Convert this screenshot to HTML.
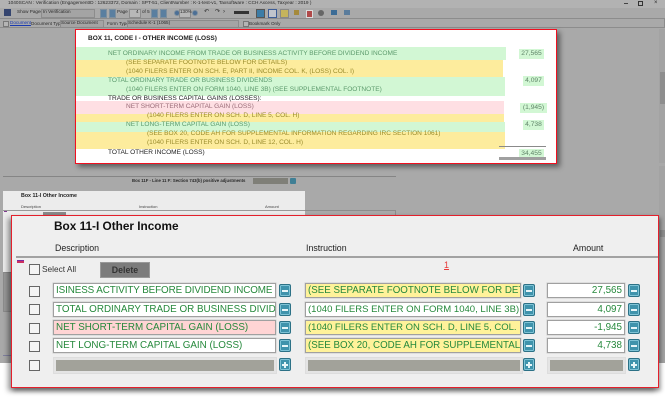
<!DOCTYPE html>
<html><head><meta charset="utf-8"><style>
html,body{margin:0;padding:0;background:#a9a9a9}
#p{position:relative;width:665px;height:407px;overflow:hidden;background:#a9a9a9;font-family:"Liberation Sans",sans-serif}
#p div{position:absolute;white-space:nowrap}
.t{font-size:4.6px;color:#2b2b2b;line-height:6px}
.ib{width:6px;height:7px;background:#5a7fa0;border:1px solid #7d8f9e}
.b{height:13px;line-height:13px;font-size:6.55px}
.g{color:#5c9a6c}.y{color:#9a8c2c}.k{color:#222}.r{color:#9a6c78}
.am{background:#d2f7d4;color:#5f8468;font-size:6.7px;text-align:center;line-height:10px;height:10px}
.in{height:13px;border:1px solid #a0a0a0;background:#fff;box-shadow:0 0 0 .5px #ccc;overflow:hidden;font-size:9.85px;line-height:13px;color:#26893c;padding-left:2px;box-sizing:content-box}
.cb{width:9px;height:9px;border:1px solid #666;background:#f4f4f4;left:29px}
.ic{width:10px;height:11px;background:#3f93ac;border:1px solid #2c7186;border-radius:2px;box-shadow:inset 0 0 0 1px #7ec3d6;color:#fff}
.ic:after{content:"";position:absolute;left:2px;top:4.5px;width:6px;height:2px;background:#e6f5f8}
.pl:before{content:"";position:absolute;left:4px;top:2.5px;width:2px;height:6px;background:#e6f5f8}
.off{height:11px;background:#a2a29a;border:2px solid #e4e4e4;outline:1px solid #ddd}
</style></head><body><div id="p">
<div style="left:0px;top:363px;width:665px;height:44px;background:#fff"></div>
<div style="left:0px;top:0px;width:665px;height:8px;background:#b2b2b2"></div>
<div class="t" style="left:8px;top:1px;font-size:4.75px">1040SCAN : Verification (EngagementID : 12623372, Domain : SPT-51, ClientNumber : K-1-test-v1, Taxsoftware : CCH Axcess, Taxyear : 2019 )</div>
<div style="left:624px;top:3px;width:4px;height:1px;background:#444"></div>
<div style="left:638px;top:1px;width:3px;height:3px;border:1px solid #333"></div>
<div class="t" style="left:654px;top:0px;font-size:6px">×</div>
<div style="left:0px;top:18px;width:665px;height:1px;background:#8c8c8c"></div>
<div style="left:4px;top:9px;width:7px;height:7px;background:#35456f"></div>
<div class="t" style="left:17px;top:9px">Show Page(s)</div>
<div style="left:41px;top:9px;width:52px;height:7px;background:#a4a4a4;border:1px solid #8c8c8c"></div>
<div class="t" style="left:43px;top:9px">In Verification</div>
<div class="ib" style="left:100px;top:9px;width:5px"></div>
<div class="ib" style="left:109px;top:9px;width:5px"></div>
<div class="t" style="left:117px;top:9px">Page</div>
<div style="left:129px;top:9px;width:10px;height:7px;background:#b8b8b8;border:1px solid #8c8c8c"></div>
<div class="t" style="left:136px;top:9px">4</div>
<div class="t" style="left:142px;top:9px">of 5</div>
<div class="ib" style="left:151px;top:9px;width:5px"></div>
<div class="ib" style="left:160px;top:9px;width:5px"></div>
<div style="left:174px;top:10px;width:4px;height:4px;border-radius:50%;background:#4c6f96;border:1px solid #7d8f9e"></div>
<div style="left:179px;top:9px;width:10px;height:7px;background:#b8b8b8;border:1px solid #8c8c8c"></div>
<div class="t" style="left:180px;top:9px">130%</div>
<div style="left:192px;top:10px;width:4px;height:4px;border-radius:50%;background:#4c6f96;border:1px solid #7d8f9e"></div>
<div class="t" style="left:204px;top:9px;font-size:6px">↶</div>
<div class="t" style="left:215px;top:9px;font-size:6px">↷</div>
<div class="t" style="left:223px;top:9px;font-size:6px">›</div>
<div style="left:234px;top:11px;width:15px;height:3px;background:#333"></div>
<div style="left:256px;top:9px;width:7px;height:7px;background:#3c7ca6;border:1px solid #555"></div>
<div style="left:268px;top:9px;width:7px;height:7px;background:#c0c4cc;border:1px solid #3c5c96"></div>
<div style="left:280px;top:9px;width:7px;height:7px;background:#c5b45c;border:1px solid #888"></div>
<div style="left:294px;top:10px;width:5px;height:5px;background:#a58a3c"></div>
<div style="left:306px;top:10px;width:5px;height:6px;background:#b04a4a;border:1px solid #ddd"></div>
<div style="left:318px;top:10px;width:6px;height:6px;border-radius:50%;background:#666"></div>
<div style="left:331px;top:10px;width:6px;height:5px;background:#3c6c96"></div>
<div style="left:344px;top:10px;width:6px;height:5px;background:#5a7c9c"></div>
<div style="left:0px;top:19px;width:664px;height:8px;border:1px solid #8c8c8c;border-width:0 1px 1px 0"></div>
<div style="left:3px;top:21px;width:4px;height:4px;background:#b4b4b4;border:1px solid #777"></div>
<div class="t" style="left:10px;top:20px;color:#1a3ab0;text-decoration:underline">Document</div>
<div class="t" style="left:31px;top:21px">Document Type</div>
<div style="left:60px;top:20px;width:42px;height:6px;background:#a4a4a4;border:1px solid #8c8c8c"></div>
<div class="t" style="left:61px;top:20px">Source Document</div>
<div class="t" style="left:107px;top:21px">Form Type</div>
<div style="left:127px;top:20px;width:110px;height:6px;background:#a4a4a4;border:1px solid #8c8c8c"></div>
<div class="t" style="left:128px;top:20px">Schedule K-1 (1065)</div>
<div style="left:243px;top:21px;width:4px;height:4px;background:#b4b4b4;border:1px solid #777"></div>
<div class="t" style="left:249px;top:21px">Bookmark Only</div>

<!-- scrollbars -->
<div style="left:659px;top:29px;width:6px;height:134px;background:#a3a3a3"></div>
<div style="left:660px;top:72px;width:5px;height:32px;background:#8e8e8e"></div>
<div style="left:659px;top:166px;width:6px;height:197px;background:#a3a3a3"></div>
<div style="left:660px;top:230px;width:5px;height:7px;background:#8e8e8e"></div>

<!-- top panel -->
<div style="left:75px;top:29px;width:480px;height:133px;background:#fff;border:1px solid #f01020;box-shadow:3px 3px 5px rgba(0,0,0,.45)"></div>
<div style="left:76px;top:47px;width:430px;height:13px;background:#d2f7d4"></div>
<div style="left:76px;top:60px;width:427px;height:17px;background:#fdec9d"></div>
<div style="left:76px;top:77px;width:429px;height:19px;background:#d2f7d4"></div>
<div style="left:76px;top:101px;width:428px;height:13px;background:#fedfe3"></div>
<div style="left:76px;top:114px;width:428px;height:8px;background:#fdec9d"></div>
<div style="left:76px;top:122px;width:429px;height:10px;background:#d2f7d4"></div>
<div style="left:76px;top:132px;width:429px;height:17px;background:#fdec9d"></div>

<div class="b k" style="left:88px;top:32px;font-weight:bold;font-size:6.5px">BOX 11, CODE I - OTHER INCOME (LOSS)</div>
<div class="b g" style="left:108px;top:47px">NET ORDINARY INCOME FROM TRADE OR BUSINESS ACTIVITY BEFORE DIVIDEND INCOME</div>
<div class="b y" style="left:126px;top:56px">(SEE SEPARATE FOOTNOTE BELOW FOR DETAILS)</div>
<div class="b y" style="left:126px;top:65px">(1040 FILERS ENTER ON SCH. E, PART II, INCOME COL. K, (LOSS) COL. I)</div>
<div class="b g" style="left:108px;top:74px">TOTAL ORDINARY TRADE OR BUSINESS DIVIDENDS</div>
<div class="b g" style="left:126px;top:83px">(1040 FILERS ENTER ON FORM 1040, LINE 3B) (SEE SUPPLEMENTAL FOOTNOTE)</div>
<div class="b k" style="left:108px;top:92px">TRADE OR BUSINESS CAPITAL GAINS (LOSSES):</div>
<div class="b r" style="left:126px;top:100px">NET SHORT-TERM CAPITAL GAIN (LOSS)</div>
<div class="b y" style="left:147px;top:109px">(1040 FILERS ENTER ON SCH. D, LINE 5, COL. H)</div>
<div class="b g" style="left:126px;top:118px">NET LONG-TERM CAPITAL GAIN (LOSS)</div>
<div class="b y" style="left:147px;top:127px">(SEE BOX 20, CODE AH FOR SUPPLEMENTAL INFORMATION REGARDING IRC SECTION 1061)</div>
<div class="b y" style="left:147px;top:136px">(1040 FILERS ENTER ON SCH. D, LINE 12, COL. H)</div>
<div class="b k" style="left:108px;top:146px">TOTAL OTHER INCOME (LOSS)</div>

<div class="am" style="left:519px;top:49px;width:25px">27,565</div>
<div class="am" style="left:523px;top:76px;width:21px">4,097</div>
<div class="am" style="left:520px;top:103px;width:27px">(1,945)</div>
<div class="am" style="left:523px;top:120px;width:21px">4,738</div>
<div style="left:499px;top:146px;width:47px;height:1px;background:#8a8a8a"></div>
<div class="am" style="left:519px;top:149px;width:25px">34,455</div>
<div style="left:499px;top:157px;width:47px;height:3px;background:#a0a0a0"></div>

<!-- middle layer -->
<div style="left:3px;top:176px;width:393px;height:1px;background:#858585"></div>
<div class="t" style="left:132px;top:178px;font-weight:bold;font-size:4.25px">Box 11F - Line 11 F: Section 743(b) positive adjustments</div>
<div style="left:253px;top:178px;width:35px;height:6px;background:#7f7f78"></div>
<div style="left:290px;top:178px;width:6px;height:6px;background:#3f7f95;border-radius:1px"></div>
<div style="left:3px;top:210px;width:391px;height:100px;border:1px solid #8c8c8c;border-bottom:0"></div>
<div style="left:3px;top:191px;width:302px;height:81px;background:#ececec"></div>
<div class="t" style="left:21px;top:193px;font-weight:bold;font-size:5.3px;color:#222">Box 11-I Other Income</div>
<div class="t" style="left:21px;top:204px;font-size:4px;color:#444">Description</div>
<div class="t" style="left:139px;top:204px;font-size:4px;color:#444">Instruction</div>
<div class="t" style="left:265px;top:204px;font-size:4px;color:#444">Amount</div>
<div style="left:3px;top:210px;width:302px;height:1px;background:#999"></div>
<div style="left:4px;top:211px;width:3px;height:1px;background:#803a90"></div>
<div style="left:43px;top:212px;width:23px;height:4px;background:#8a8a8a"></div>
<div style="left:3px;top:272px;width:8px;height:38px;background:#999;border:1px solid #8c8c8c;border-right:0"></div>
<div style="left:3px;top:355px;width:8px;height:1px;background:#8080a0"></div>

<!-- bottom panel -->
<div style="left:11px;top:215px;width:646px;height:171px;background:#efefef;border:1px solid #e4202c;box-shadow:-3px 3px 5px rgba(0,0,0,.4),2px 3px 4px rgba(0,0,0,.35)"></div>
<div style="left:54px;top:220px;font-weight:bold;font-size:11.8px;line-height:13px;color:#111">Box 11-I Other Income</div>
<div style="left:55px;top:243px;font-size:8.8px;line-height:11px;color:#222">Description</div>
<div style="left:306px;top:243px;font-size:8.8px;line-height:11px;color:#222">Instruction</div>
<div style="left:573px;top:243px;font-size:8.8px;line-height:11px;color:#222">Amount</div>
<div style="left:16px;top:256px;width:642px;height:2px;background:#a2a2a2"></div>
<div style="left:17px;top:260px;width:7px;height:1px;background:#7a2aa0"></div>
<div style="left:17px;top:261px;width:7px;height:2px;background:#cc3060"></div>
<div class="cb" style="top:264px"></div>
<div style="left:42px;top:263px;font-size:8.3px;line-height:12px;color:#333">Select All</div>
<div style="left:100px;top:262px;width:50px;height:16px;background:#7c7c7c;box-shadow:inset 0 0 0 1px #999;text-align:center;font-weight:bold;font-size:8.8px;line-height:16px;color:#333">Delete</div>
<div style="left:444px;top:260px;font-size:9px;line-height:11px;color:#e83a3a;text-decoration:underline">1</div>

<div class="cb" style="top:286px"></div>
<div class="in" style="left:53px;top:283px;width:219px;letter-spacing:-.1px">ISINESS ACTIVITY BEFORE DIVIDEND INCOME</div>
<div class="ic" style="left:279px;top:284px"></div>
<div class="in" style="left:305px;top:283px;width:212px;background:#fff29a;font-size:9.75px">(SEE SEPARATE FOOTNOTE BELOW FOR DETAILS)</div>
<div class="ic" style="left:523px;top:284px"></div>
<div class="in" style="left:547px;top:283px;width:74px;padding:0 2px 0 0;text-align:right">27,565</div>
<div class="ic" style="left:628px;top:284px"></div>

<div class="cb" style="top:304px"></div>
<div class="in" style="left:53px;top:302px;width:219px">TOTAL ORDINARY TRADE OR BUSINESS DIVIDENDS</div>
<div class="ic" style="left:279px;top:303px"></div>
<div class="in" style="left:305px;top:302px;width:212px;background:#fff;font-size:9.55px">(1040 FILERS ENTER ON FORM 1040, LINE 3B)</div>
<div class="ic" style="left:523px;top:303px"></div>
<div class="in" style="left:547px;top:302px;width:74px;padding:0 2px 0 0;text-align:right">4,097</div>
<div class="ic" style="left:628px;top:303px"></div>

<div class="cb" style="top:323px"></div>
<div class="in" style="left:53px;top:320px;width:219px;background:#ffd4d4">NET SHORT-TERM CAPITAL GAIN (LOSS)</div>
<div class="ic" style="left:279px;top:321px"></div>
<div class="in" style="left:305px;top:320px;width:212px;background:#fff29a;font-size:9.5px">(1040 FILERS ENTER ON SCH. D, LINE 5, COL.</div>
<div class="ic" style="left:523px;top:321px"></div>
<div class="in" style="left:547px;top:320px;width:74px;padding:0 2px 0 0;text-align:right">-1,945</div>
<div class="ic" style="left:628px;top:321px"></div>

<div class="cb" style="top:341px"></div>
<div class="in" style="left:53px;top:338px;width:219px">NET LONG-TERM CAPITAL GAIN (LOSS)</div>
<div class="ic" style="left:279px;top:339px"></div>
<div class="in" style="left:305px;top:338px;width:212px;background:#fff29a;font-size:9.75px">(SEE BOX 20, CODE AH FOR SUPPLEMENTAL</div>
<div class="ic" style="left:523px;top:339px"></div>
<div class="in" style="left:547px;top:338px;width:74px;padding:0 2px 0 0;text-align:right">4,738</div>
<div class="ic" style="left:628px;top:339px"></div>

<div class="cb" style="top:360px"></div>
<div class="off" style="left:54px;top:358px;width:218px"></div>
<div class="ic pl" style="left:279px;top:358px"></div>
<div class="off" style="left:306px;top:358px;width:212px"></div>
<div class="ic pl" style="left:523px;top:358px"></div>
<div class="off" style="left:548px;top:358px;width:73px"></div>
<div class="ic pl" style="left:628px;top:358px"></div>
</div></body></html>
